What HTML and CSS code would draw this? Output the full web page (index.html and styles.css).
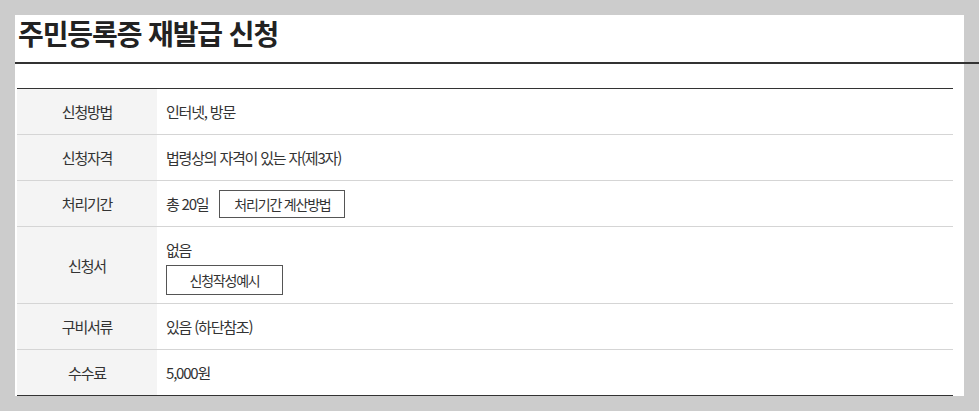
FILE: index.html
```html
<!DOCTYPE html>
<html lang="ko">
<head>
<meta charset="utf-8">
<title>주민등록증 재발급 신청</title>
<link rel="stylesheet" href="styles.css">
</head>
<body>
<div class="page">
  <h2 class="title">주민등록증 재발급 신청</h2>
  <div class="info">
    <div class="row">
      <div class="th">신청방법</div>
      <div class="td">인터넷, 방문</div>
    </div>
    <div class="row">
      <div class="th">신청자격</div>
      <div class="td">법령상의 자격이 있는 자(제3자)</div>
    </div>
    <div class="row">
      <div class="th">처리기간</div>
      <div class="td">총 20일 <button class="btn btn-calc" type="button">처리기간 계산방법</button></div>
    </div>
    <div class="row">
      <div class="th">신청서</div>
      <div class="td td-stack">
        <span class="line">없음</span>
        <button class="btn btn-example" type="button">신청작성예시</button>
      </div>
    </div>
    <div class="row">
      <div class="th">구비서류</div>
      <div class="td">있음 (하단참조)</div>
    </div>
    <div class="row">
      <div class="th">수수료</div>
      <div class="td">5,000원</div>
    </div>
  </div>
</div>
</body>
</html>
```
FILE: styles.css
```css
html, body {
  margin: 0;
  padding: 0;
}
body {
  background: #cccccc;
  font-family: "Noto Sans CJK KR", "Noto Sans", sans-serif;
  color: #333333;
  overflow: hidden;
}
.page {
  margin: 15px 15px 0 15px;
  width: 936px;
  height: 381px;
  padding: 0 11px 0 2px;
  background: #ffffff;
}
.title {
  margin: 0 -26px 24px -2px;
  padding: 0 0 11px 3px;
  font-size: 28px;
  line-height: 36px;
  font-weight: 700;
  letter-spacing: -1.1px;
  color: #222222;
  border-bottom: 2px solid #333333;
}
.info {
  border-top: 1px solid #333333;
  border-bottom: 2px solid #333333;
}
.row {
  display: grid;
  grid-template-columns: 140px 1fr;
  border-bottom: 1px solid #d5d5d5;
}
.row:last-child {
  border-bottom: 0;
}
.th {
  background: #f4f4f4;
  display: flex;
  align-items: center;
  justify-content: center;
  font-size: 15px;
  letter-spacing: -1.2px;
  min-height: 45px;
}
.td {
  display: flex;
  align-items: center;
  min-height: 45px;
  padding: 0 9px;
  font-size: 15px;
  letter-spacing: -1.2px;
  line-height: 21px;
}
.td-stack {
  flex-direction: column;
  align-items: flex-start;
  padding: 12px 9px 8px;
}
.btn {
  font-family: inherit;
  color: #333333;
  background: #ffffff;
  border: 1px solid #555555;
  border-radius: 0;
  font-size: 14px;
  letter-spacing: -1.2px;
  padding: 0;
  cursor: pointer;
}
.btn-calc {
  margin-left: 11px;
  width: 126px;
  height: 28px;
}
.btn-example {
  margin-top: 5px;
  width: 117px;
  height: 30px;
}
```
